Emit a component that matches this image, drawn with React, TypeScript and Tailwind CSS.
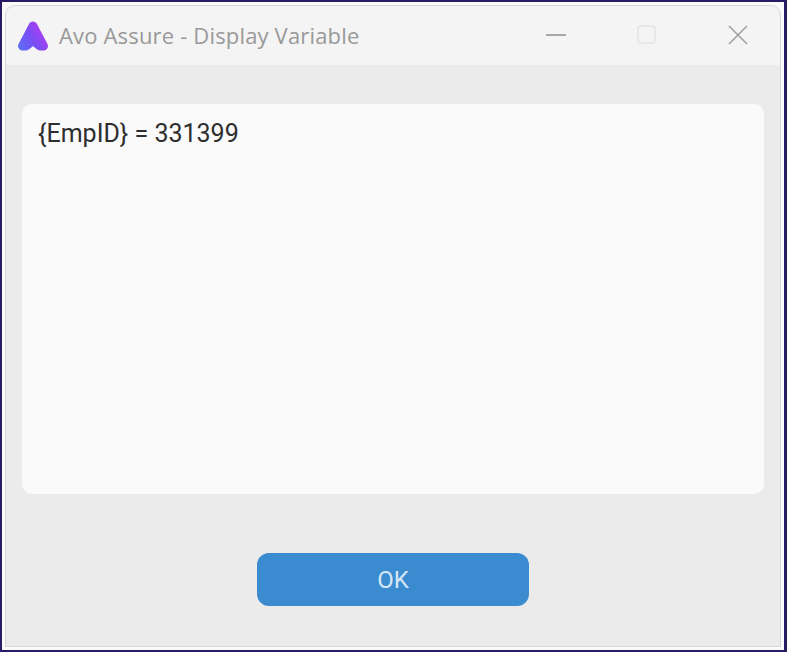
function Logo() {
  return (
    <svg width="34" height="34" viewBox="0 0 34 34" fill="none" className="shrink-0">
      <defs>
        <linearGradient id="avo" x1="3" y1="30" x2="31" y2="12" gradientUnits="userSpaceOnUse">
          <stop offset="0" stopColor="#5a70f5" />
          <stop offset="0.5" stopColor="#7a4df5" />
          <stop offset="1" stopColor="#b43cf0" />
        </linearGradient>
      </defs>
      <path
        d="M17 7 L6.5 27 L10 27 L17 21.5 L24 27 L27.5 27 Z"
        fill="url(#avo)"
        stroke="url(#avo)"
        strokeWidth="9"
        strokeLinejoin="round"
      />
    </svg>
  );
}

export default function App() {
  return (
    <div className="h-[652px] w-[787px] overflow-hidden border-y-[2px] border-l-[2px] border-r-[3px] border-[#2b1a66] bg-[#fbfbfb] pt-[3px] pr-[3px] pb-[3px] pl-[3px]">
      <div className="flex h-full flex-col overflow-hidden rounded-t-[10px] border border-[#d6d6d6] bg-[#ebebeb] font-['Roboto',sans-serif]">
        <div className="flex h-[59px] shrink-0 items-center bg-[#f4f4f4] pl-[10px]">
          <Logo />
          <span className="mb-[2px] ml-[9px] font-['Open_Sans',sans-serif] text-[22px] leading-none tracking-[0.17px] text-[#999999]">
            Avo Assure - Display Variable
          </span>
          <div className="mb-[2px] ml-auto flex items-center">
            <svg width="20" height="20" viewBox="0 0 20 20" className="mr-[71px]">
              <path d="M0 10H20" stroke="#a8a8a8" strokeWidth="2" />
            </svg>
            <svg width="20" height="20" viewBox="0 0 20 20" className="mr-[71px]">
              <rect x="1" y="1" width="17" height="17" rx="3" fill="none" stroke="#e4e4e4" strokeWidth="1.5" />
            </svg>
            <svg width="20" height="20" viewBox="0 0 20 20" className="mr-[32px]">
              <path d="M1 1L19 19M19 1L1 19" stroke="#a0a0a0" strokeWidth="1.6" />
            </svg>
          </div>
        </div>
        <div className="flex flex-1 flex-col items-center pr-[16px] pl-[16px] pt-[39px]">
          <div className="h-[390px] w-full rounded-[10px] bg-[#fafafa] px-[16px] py-[14px] text-[25px] leading-[32px] text-[#2e2e2e]">
            {'{EmpID} = 331399'}
          </div>
          <button className="mt-[59px] h-[53px] w-[272px] rounded-[12px] bg-[#3b8bd0] text-[24px] text-[#d5e6f5]">
            OK
          </button>
        </div>
      </div>
    </div>
  );
}
